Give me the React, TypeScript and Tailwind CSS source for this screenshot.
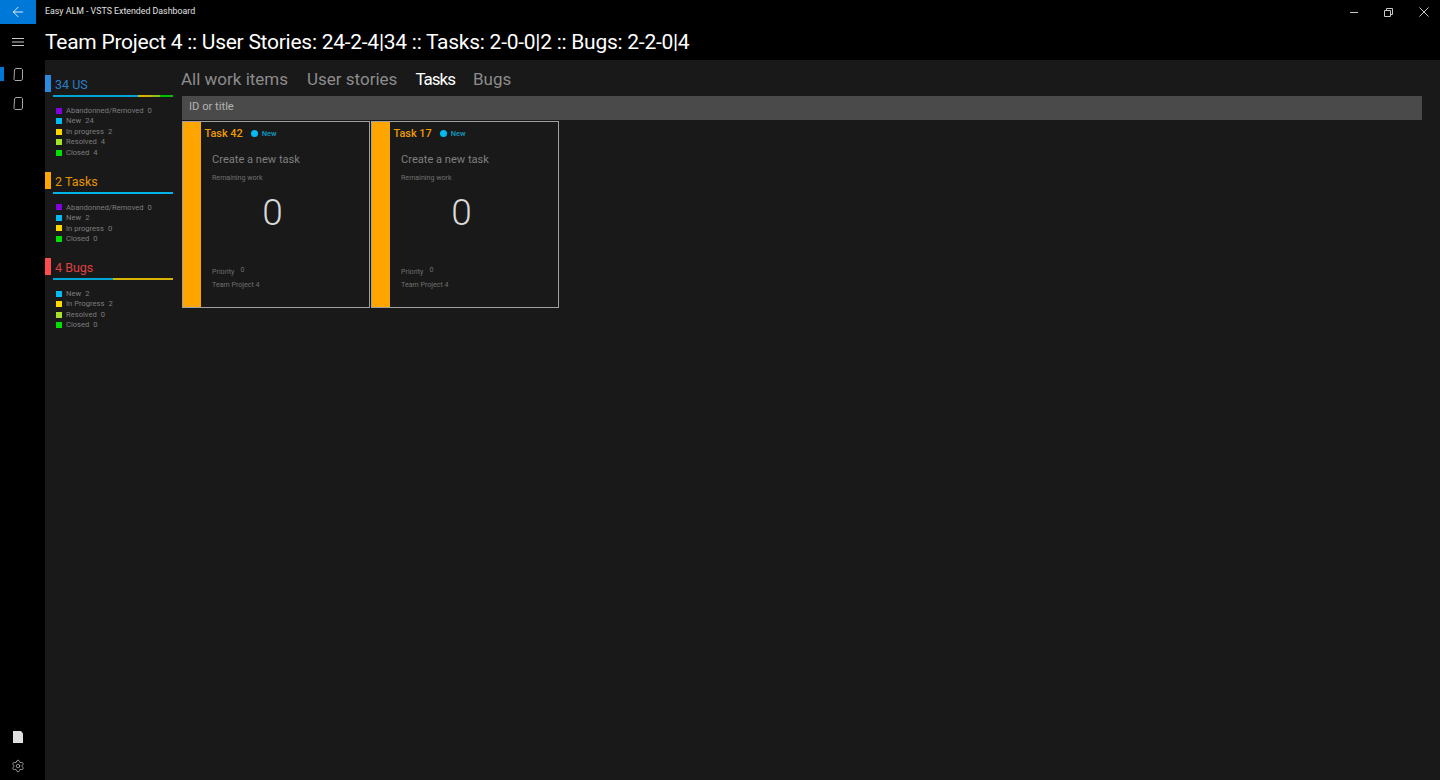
import { ArrowLeft, Settings } from 'lucide-react';

const FONT = "font-['Roboto','Open_Sans',sans-serif]";

interface LegendRow {
  label: string;
  count: number;
  color: string;
}

interface Segment {
  color: string;
  width: string;
}

interface SummaryProps {
  title: string;
  marker: string;
  text: string;
  segments: Segment[];
  rows: LegendRow[];
}

const usRows: LegendRow[] = [
  { label: 'Abandonned/Removed', count: 0, color: 'bg-[#8000e0]' },
  { label: 'New', count: 24, color: 'bg-[#00bcf2]' },
  { label: 'In progress', count: 2, color: 'bg-[#ffd800]' },
  { label: 'Resolved', count: 4, color: 'bg-[#a4e02c]' },
  { label: 'Closed', count: 4, color: 'bg-[#00e000]' },
];

const taskRows: LegendRow[] = [
  { label: 'Abandonned/Removed', count: 0, color: 'bg-[#8000e0]' },
  { label: 'New', count: 2, color: 'bg-[#00bcf2]' },
  { label: 'In progress', count: 0, color: 'bg-[#ffd800]' },
  { label: 'Closed', count: 0, color: 'bg-[#00e000]' },
];

const bugRows: LegendRow[] = [
  { label: 'New', count: 2, color: 'bg-[#00bcf2]' },
  { label: 'In Progress', count: 2, color: 'bg-[#ffd800]' },
  { label: 'Resolved', count: 0, color: 'bg-[#a4e02c]' },
  { label: 'Closed', count: 0, color: 'bg-[#00e000]' },
];

function NoteIcon() {
  return (
    <svg width="10" height="13" viewBox="0 0 10 13" fill="none" stroke="#a8a8a8" strokeWidth="1">
      <path d="M2.500 .5h6l1 1v9.500l-1 1.500h-6.500l-1-1 .5-9.500z" />
    </svg>
  );
}

function Summary({ title, marker, text, segments, rows }: SummaryProps) {
  return (
    <section className="mb-[14px]">
      <div className="flex h-[20px] items-start">
        <div className={`h-[17px] w-[6px] ${marker}`} />
        <span className={`ml-[4px] text-[12.5px] leading-[19px] ${text}`}>{title}</span>
      </div>
      <div className="ml-[8px] flex h-[2px] w-[120px]">
        {segments.map((s, i) => (
          <div key={i} className={`h-full ${s.color} ${s.width}`} />
        ))}
      </div>
      <ul className="ml-[11px] mt-[8.25px]">
        {rows.map((row) => (
          <li key={row.label} className="flex h-[10.5px] items-center text-[7.6px] text-[#7d7d7d]">
            <span className={`mr-[4px] h-[6px] w-[6px] shrink-0 ${row.color}`} />
            <span>{row.label}</span>
            <span className="ml-[4px]">{row.count}</span>
          </li>
        ))}
      </ul>
    </section>
  );
}

function TaskCard({ title }: { title: string }) {
  return (
    <article className="flex h-[187px] w-[188px] border border-[#a0a0a0] bg-[#191919]">
      <div className="w-[18px] shrink-0 bg-[#ffa500]" />
      <div className="flex min-w-0 flex-1 flex-col">
        <div className="ml-[3.5px] mt-[4px] flex h-[16px] items-center">
          <span className="text-[10.9px] font-medium text-[#f09c00]">{title}</span>
          <span className="mb-[1px] ml-[8px] h-[7px] w-[7px] rounded-full bg-[#00bcf2]" />
          <span className="ml-[4px] text-[7.5px] font-medium text-[#0f9bc4]">New</span>
        </div>
        <p className="ml-[11px] mt-[10px] text-[11.1px] leading-[16px] text-[#7f7f7f]">Create a new task</p>
        <p className="ml-[11px] mt-[5px] text-[7.1px] leading-[10px] text-[#6f6f6f]">Remaining work</p>
        <p className="mt-[5px] pr-[25px] text-center text-[37px] font-light leading-[50px] text-[#d8d8d8]">0</p>
        <div className="ml-[11px] mt-[27px] flex items-start text-[7.1px] leading-[10px] text-[#6f6f6f]">
          <span className="mt-[2px]">Priority</span>
          <span className="ml-[6px]">0</span>
        </div>
        <p className="ml-[11px] mt-[3px] text-[7.1px] leading-[10px] text-[#6f6f6f]">Team Project 4</p>
      </div>
    </article>
  );
}

export default function App() {
  return (
    <div className={`flex h-[780px] w-[1440px] flex-col overflow-hidden bg-black text-white ${FONT}`}>
      <header className="flex h-[24px] shrink-0 items-center">
        <button type="button" className="flex h-[24px] w-[36px] items-center justify-center bg-[#0078d7]">
          <ArrowLeft className="h-[16px] w-[16px] text-white" strokeWidth={1.3} />
        </button>
        <span className="ml-[9px] flex-1 text-[8.8px] text-[#e0e0e0]">Easy ALM - VSTS Extended Dashboard</span>
        <div className="flex w-[100px] items-center text-[#c8c8c8]">
          <svg className="ml-[10px]" width="8" height="9" viewBox="0 0 8 9" fill="none" stroke="currentColor">
            <path d="M0 4.500h8" />
          </svg>
          <svg className="ml-[26px]" width="9" height="9" viewBox="0 0 9 9" fill="none" stroke="currentColor">
            <path d="M.5 2.500h6v6h-6zM2.500 2.500v-2h6v6h-2" />
          </svg>
          <svg className="ml-[26px]" width="10" height="10" viewBox="0 0 10 10" fill="none" stroke="currentColor">
            <path d="M.5 .5l9 9M9.500 .5l-9 9" />
          </svg>
        </div>
      </header>

      <div className="flex min-h-0 flex-1">
        <nav className="flex w-[45px] shrink-0 flex-col items-start text-[#c8c8c8]">
          <div className="flex w-[36px] flex-col items-center">
            <svg className="mt-[14px]" width="12" height="8" viewBox="0 0 12 8" fill="none" stroke="currentColor">
              <path d="M0 .5h12M0 4h12M0 7.500h12" />
            </svg>
          </div>
          <div className="relative mt-[21px] flex h-[14px] w-[36px] items-center justify-center">
            <span className="absolute left-0 top-0 h-[14px] w-[4px] bg-[#0078d7]" />
            <NoteIcon />
          </div>
          <div className="mt-[15px] flex h-[14px] w-[36px] items-center justify-center">
            <NoteIcon />
          </div>
          <div className="mt-auto flex w-[36px] flex-col items-center">
            <div className="h-[12px] w-[10px] bg-[#e0e0e0] [clip-path:polygon(0_0,80%_0,100%_20%,100%_100%,0_100%)]" />
            <Settings className="mb-[7px] mt-[16px] h-[14px] w-[14px]" strokeWidth={1.2} />
          </div>
        </nav>

        <div className="flex min-w-0 flex-1 flex-col">
          <h1 className="h-[36px] shrink-0 text-[21px] leading-[36px] tracking-[-0.26px] text-white">
            Team Project 4 :: User Stories: 24-2-4|34 :: Tasks: 2-0-0|2 :: Bugs: 2-2-0|4
          </h1>
          <main className="flex min-h-0 flex-1 bg-[#191919]">
            <aside className="w-[136px] shrink-0 pt-[15px]">
              <Summary
                title="34 US"
                marker="bg-[#2a8ae0]"
                text="text-[#2a7fc8]"
                segments={[
                  { color: 'bg-[#00a5d4]', width: 'w-[85px]' },
                  { color: 'bg-[#d8b400]', width: 'w-[13px]' },
                  { color: 'bg-[#8ec020]', width: 'w-[9px]' },
                  { color: 'bg-[#00c000]', width: 'w-[13px]' },
                ]}
                rows={usRows}
              />
              <Summary
                title="2 Tasks"
                marker="bg-[#ffa500]"
                text="text-[#e89600]"
                segments={[{ color: 'bg-[#00b4e8]', width: 'w-[120px]' }]}
                rows={taskRows}
              />
              <Summary
                title="4 Bugs"
                marker="bg-[#ff4d4d]"
                text="text-[#e04040]"
                segments={[
                  { color: 'bg-[#00a5d4]', width: 'w-[60px]' },
                  { color: 'bg-[#d8b400]', width: 'w-[60px]' },
                ]}
                rows={bugRows}
              />
            </aside>

            <div className="flex min-w-0 flex-1 flex-col pr-[18px]">
              <div className="flex h-[36px] items-center pt-[3px] text-[17px] text-[#8c8c8c]">
                <span>All work items</span>
                <span className="ml-[19px]">User stories</span>
                <span className="ml-[18px] tracking-[-1px] text-white">Tasks</span>
                <span className="ml-[18px]">Bugs</span>
              </div>
              <div className="ml-[1px] flex h-[24px] items-center bg-[#4a4a4a] px-[7px] pb-[2px] text-[11.2px] text-[#b4b4b4]">
                ID or title
              </div>
              <div className="ml-[1px] mt-[1px] flex gap-[1px]">
                <TaskCard title="Task 42" />
                <TaskCard title="Task 17" />
              </div>
            </div>
          </main>
        </div>
      </div>
    </div>
  );
}
